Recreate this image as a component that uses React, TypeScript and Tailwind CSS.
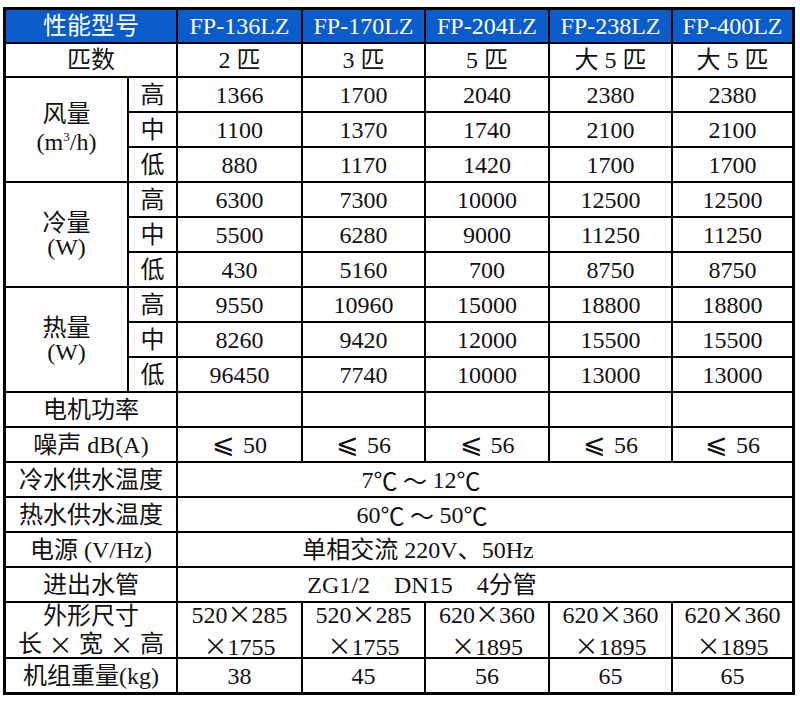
import React from "react";

const serif = { fontFamily: "'Liberation Serif','Noto Sans CJK SC',serif" };
const cjk = "font-['Noto_Sans_CJK_SC',sans-serif]";

const models = ["FP-136LZ", "FP-170LZ", "FP-204LZ", "FP-238LZ", "FP-400LZ"];
const pishu = ["2 匹", "3 匹", "5 匹", "大 5 匹", "大 5 匹"];

const groups = [
  {
    name: "风量",
    unit: (
      <>
        (m<span className="text-[13px] relative -top-[9px]">3</span>/h)
      </>
    ),
    lh: "leading-[28px]",
    rows: [
      ["高", ["1366", "1700", "2040", "2380", "2380"]],
      ["中", ["1100", "1370", "1740", "2100", "2100"]],
      ["低", ["880", "1170", "1420", "1700", "1700"]],
    ],
  },
  {
    name: "冷量",
    unit: "(W)",
    lh: "leading-[24px]",
    rows: [
      ["高", ["6300", "7300", "10000", "12500", "12500"]],
      ["中", ["5500", "6280", "9000", "11250", "11250"]],
      ["低", ["430", "5160", "700", "8750", "8750"]],
    ],
  },
  {
    name: "热量",
    unit: "(W)",
    lh: "leading-[24px]",
    rows: [
      ["高", ["9550", "10960", "15000", "18800", "18800"]],
      ["中", ["8260", "9420", "12000", "15500", "15500"]],
      ["低", ["96450", "7740", "10000", "13000", "13000"]],
    ],
  },
] as const;

const noise = ["50", "56", "56", "56", "56"];
const dims = [
  ["520", "285", "1755"],
  ["520", "285", "1755"],
  ["620", "360", "1895"],
  ["620", "360", "1895"],
  ["620", "360", "1895"],
];
const weight = ["38", "45", "56", "65", "65"];

const X = () => <span className={cjk}>×</span>;

const Cell = ({ className = "", children }: { className?: string; children?: React.ReactNode }) => (
  <div className={`bg-white flex items-center justify-center text-center whitespace-pre ${className}`}>
    {children}
  </div>
);

export default function App() {
  return (
    <div className="w-[800px] h-[703px] bg-white pt-[7px] pl-[3px]" style={serif}>
      <div className="w-[792px] grid grid-cols-[121px_47px_123px_121px_122px_121px_119px] grid-rows-[32px_32px_repeat(15,33px)_54px_33px] gap-[2px] bg-black border-[3px] border-black text-[24px] leading-none text-[#111]">
        {/* header */}
        <Cell className="col-span-2 !bg-[#0b5ccb] text-white">性能型号</Cell>
        {models.map((m) => (
          <Cell key={m} className="!bg-[#0b5ccb] text-white">
            {m}
          </Cell>
        ))}

        <Cell className="col-span-2">匹数</Cell>
        {pishu.map((p, i) => (
          <Cell key={i}>{p}</Cell>
        ))}

        {groups.map((g) =>
          g.rows.map(([lvl, vals], ri) => (
            <React.Fragment key={g.name + lvl}>
              {ri === 0 && (
                <Cell className={`row-span-3 flex-col ${g.lh}`}>
                  <span>{g.name}</span>
                  <span>{g.unit}</span>
                </Cell>
              )}
              <Cell>{lvl}</Cell>
              {vals.map((v, i) => (
                <Cell key={i}>{v}</Cell>
              ))}
            </React.Fragment>
          ))
        )}

        <Cell className="col-span-2">电机功率</Cell>
        {[0, 1, 2, 3, 4].map((i) => (
          <Cell key={i} />
        ))}

        <Cell className="col-span-2">噪声 dB(A)</Cell>
        {noise.map((n, i) => (
          <Cell key={i}>
            <span className="font-['DejaVu_Sans',sans-serif] text-[27px] font-light mr-[8px] relative -top-[1px]">⩽</span>
            {n}
          </Cell>
        ))}

        <Cell className="col-span-2">冷水供水温度</Cell>
        <Cell className="col-span-5 pr-[128px]">
          7<span className={cjk}>℃ ～ </span>12<span className={cjk}>℃</span>
        </Cell>

        <Cell className="col-span-2">热水供水温度</Cell>
        <Cell className="col-span-5 pr-[126px]">
          60<span className={cjk}>℃ ～ </span>50<span className={cjk}>℃</span>
        </Cell>

        <Cell className="col-span-2">电源 (V/Hz)</Cell>
        <Cell className="col-span-5 pr-[134px]">单相交流 220V、50Hz</Cell>

        <Cell className="col-span-2">进出水管</Cell>
        <Cell className="col-span-5 pr-[126px]">ZG1/2　DN15　4分管</Cell>

        <Cell className="col-span-2 flex-col leading-[28px]">
          <span>外形尺寸</span>
          <span className="flex w-full justify-between px-[12px]">
            <span>长</span>
            <X />
            <span>宽</span>
            <X />
            <span>高</span>
          </span>
        </Cell>
        {dims.map(([a, b, c], i) => (
          <Cell key={i} className="flex-col leading-[29px]">
            <span>
              {a}
              <X />
              {b}
            </span>
            <span>
              <X />
              {c}
            </span>
          </Cell>
        ))}

        <Cell className="col-span-2">机组重量(kg)</Cell>
        {weight.map((w, i) => (
          <Cell key={i}>{w}</Cell>
        ))}
      </div>
    </div>
  );
}
